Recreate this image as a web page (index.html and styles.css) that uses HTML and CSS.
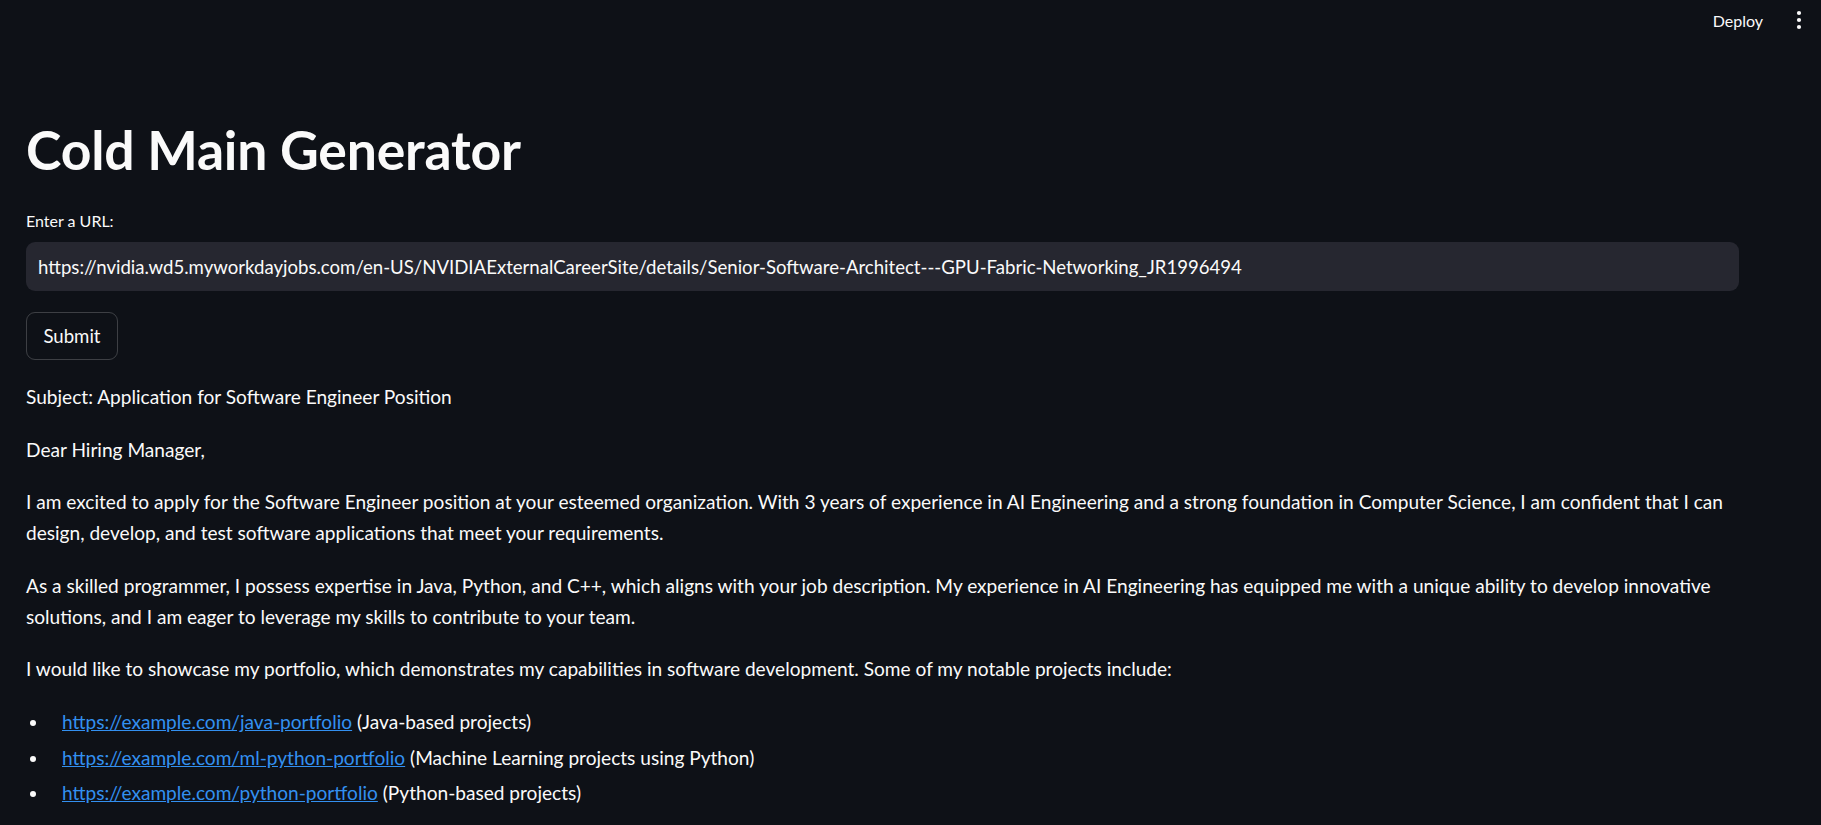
FILE: index.html
```html
<!DOCTYPE html>
<html lang="en">
<head>
<meta charset="utf-8">
<title>Cold Main Generator</title>
<link rel="stylesheet" href="styles.css">
</head>
<body>
<header class="toolbar">
  <button class="deploy">Deploy</button>
  <button class="kebab" aria-label="Main menu">
    <svg width="6" height="20" viewBox="0 0 6 20"><circle cx="3" cy="3" r="2.1" fill="#fafafa"/><circle cx="3" cy="10" r="2.1" fill="#fafafa"/><circle cx="3" cy="17" r="2.1" fill="#fafafa"/></svg>
  </button>
</header>
<main class="main">
  <h1 class="title">Cold Main Generator</h1>
  <label class="label" for="url">Enter a URL:</label>
  <div class="input-wrap">
    <input id="url" class="input" type="text" value="https://nvidia.wd5.myworkdayjobs.com/en-US/NVIDIAExternalCareerSite/details/Senior-Software-Architect---GPU-Fabric-Networking_JR1996494">
  </div>
  <div class="btn-row"><button class="submit">Submit</button></div>
  <div class="markdown">
    <p>Subject: Application for Software Engineer Position</p>
    <p>Dear Hiring Manager,</p>
    <p>I am excited to apply for the Software Engineer position at your esteemed organization. With 3 years of experience in AI Engineering and a strong foundation in Computer Science, I am confident that I can design, develop, and test software applications that meet your requirements.</p>
    <p>As a skilled programmer, I possess expertise in Java, Python, and C++, which aligns with your job description. My experience in AI Engineering has equipped me with a unique ability to develop innovative solutions, and I am eager to leverage my skills to contribute to your team.</p>
    <p>I would like to showcase my portfolio, which demonstrates my capabilities in software development. Some of my notable projects include:</p>
    <ul class="list">
      <li><a href="#">https://example.com/java-portfolio</a> (Java-based projects)</li>
      <li><a href="#">https://example.com/ml-python-portfolio</a> (Machine Learning projects using Python)</li>
      <li><a href="#">https://example.com/python-portfolio</a> (Python-based projects)</li>
    </ul>
  </div>
</main>
</body>
</html>
```
FILE: styles.css
```css
* { box-sizing: border-box; }
html, body {
  margin: 0;
  padding: 0;
  background: #0e1117;
  color: #fafafa;
  font-family: Lato, "Noto Sans", sans-serif;
  overflow: hidden;
}
.toolbar {
  height: 40px;
  display: flex;
  justify-content: flex-end;
  align-items: center;
  gap: 12px;
  padding-right: 10px;
}
.deploy {
  background: transparent;
  border: none;
  color: #fafafa;
  font-family: inherit;
  font-size: 16px;
  padding: 0 12px;
  height: 32px;
}
.kebab {
  background: transparent;
  border: none;
  width: 24px;
  height: 32px;
  padding: 0;
  display: flex;
  align-items: center;
  justify-content: center;
}
.main {
  padding-left: 26px;
  width: 1739px;
}
.title {
  margin: 0;
  padding-top: 79px;
  font-size: 53.5px;
  font-weight: 700;
  line-height: 61px;
  letter-spacing: -0.2px;
}
.label {
  display: block;
  margin-top: 30px;
  font-size: 16px;
  line-height: 22px;
}
.input-wrap {
  margin-top: 10px;
  height: 49px;
  background: #262730;
  border-radius: 9px;
  display: flex;
  align-items: center;
}
.input {
  width: 100%;
  background: transparent;
  border: none;
  outline: none;
  color: #fafafa;
  font-family: inherit;
  font-size: 18.6px;
  padding: 0 12px;
}
.btn-row { margin-top: 21px; }
.submit {
  height: 48px;
  width: 92px;
  background: transparent;
  border: 1px solid rgba(250, 250, 250, 0.2);
  border-radius: 9px;
  color: #fafafa;
  font-family: inherit;
  font-size: 18.6px;
  padding: 0;
}
.markdown {
  margin-top: 22px;
  font-size: 19.1px;
  line-height: 30.7px;
}
.markdown p { margin: 0 0 22px; }
.list {
  list-style: none;
  margin: 0;
  padding: 0;
}
.list li { margin-bottom: 5px; }
.list li::before {
  content: "";
  display: inline-block;
  width: 6px;
  height: 6px;
  border-radius: 50%;
  background: #fafafa;
  margin: 0 26px 0 4px;
  vertical-align: 3px;
}
.list a { color: #3390f0; text-decoration: underline; }
```
